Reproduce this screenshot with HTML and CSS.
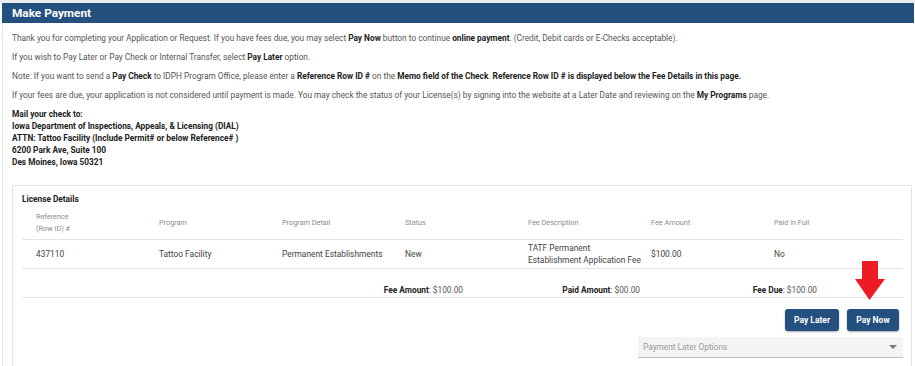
FILE: index.html
```html
<!DOCTYPE html>
<html lang="en">
<head>
<meta charset="utf-8">
<title>Make Payment</title>
<link rel="stylesheet" href="styles.css">
</head>
<body>
<section class="panel">
  <h1 class="panel-title">Make Payment</h1>
  <div class="panel-body">
    <p>Thank you for completing your Application or Request. If you have fees due, you may select <b>Pay Now</b> button to continue <b>online payment</b>. (Credit, Debit cards or E-Checks acceptable).</p>
    <p>If you wish to Pay Later or Pay Check or Internal Transfer, select <b>Pay Later</b> option.</p>
    <p>Note: If you want to send a <b>Pay Check</b> to IDPH Program Office, please enter a <b>Reference Row ID #</b> on the <b>Memo field of the Check</b>. <b>Reference Row ID # is displayed below the Fee Details in this page.</b></p>
    <p>If your fees are due, your application is not considered until payment is made. You may check the status of your License(s) by signing into the website at a Later Date and reviewing on the <b>My Programs</b> page.</p>
    <p class="mail">Mail your check to:<br>Iowa Department of Inspections, Appeals, &amp; Licensing (DIAL)<br>ATTN: Tattoo Facility (Include Permit# or below Reference# )<br>6200 Park Ave, Suite 100<br>Des Moines, Iowa 50321</p>

    <div class="card">
      <h2 class="card-title">License Details</h2>
      <div class="grid head">
        <div class="cell">Reference<br>(Row ID) #</div>
        <div class="cell">Program</div>
        <div class="cell">Program Detail</div>
        <div class="cell">Status</div>
        <div class="cell">Fee Description</div>
        <div class="cell">Fee Amount</div>
        <div class="cell">Paid in Full</div>
      </div>
      <div class="grid row">
        <div class="cell">437110</div>
        <div class="cell">Tattoo Facility</div>
        <div class="cell">Permanent Establishments</div>
        <div class="cell">New</div>
        <div class="cell">TATF Permanent<br>Establishment Application Fee</div>
        <div class="cell">$100.00</div>
        <div class="cell">No</div>
      </div>
      <div class="totals">
        <span></span>
        <span class="total"><b>Fee Amount</b>: $100.00</span>
        <span class="total"><b>Paid Amount</b>: $00.00</span>
        <span class="total"><b>Fee Due</b>: $100.00</span>
        <span></span>
      </div>
      <div class="actions">
        <button class="btn" type="button">Pay Later</button>
        <button class="btn" type="button">Pay Now</button>
        <svg class="arrow" width="30" height="40" viewBox="0 0 30 40"><polygon points="7,0 23,0 23,18 30,18 14.5,39 0,18 7,18" fill="#ed1c24"/></svg>
      </div>
      <div class="select-row">
        <div class="select">
          <span>Payment Later Options</span>
          <svg width="8" height="5" viewBox="0 0 8 5"><polygon points="0,0 8,0 4,4" fill="#777"/></svg>
        </div>
      </div>
    </div>
  </div>
</section>
</body>
</html>
```
FILE: styles.css
```css
* { box-sizing: border-box; }
html, body { margin: 0; padding: 0; }
body {
  background: #fff;
  border-top: 3px solid #ececec;
  font-family: Roboto, "Liberation Sans", Arial, sans-serif;
  color: #555;
  font-size: 8.3px;
}
.panel { margin: 0 1px 0 2px; }
.panel-title {
  margin: 0;
  height: 20px;
  line-height: 20px;
  padding-left: 10px;
  background: #23507f;
  color: #fff;
  font-size: 11.8px;
  font-weight: 700;
}
.panel-body {
  border-left: 1px solid #e6e6e6;
  padding: 9px 2px 0 9px;
}
.panel-body p {
  margin: 0 0 7px;
  line-height: 12px;
}
.panel-body b { color: #222; font-weight: 700; }
.panel-body p.mail { color: #222; font-weight: 700; margin-bottom: 0; }
.card {
  margin-top: 17px;
  border: 1px solid #e6e6e6;
  padding: 7px 8px 20px 9px;
  position: relative;
}
.card-title {
  margin: 0;
  font-size: 8.3px;
  line-height: 12px;
  font-weight: 700;
  color: #222;
}
.grid {
  display: grid;
  grid-template-columns: repeat(6, 123px) 1fr;
  align-items: center;
}
.cell { padding-left: 14px; line-height: 12px; white-space: nowrap; }
.head {
  padding: 6px 0 4px;
  border-bottom: 1px solid #e4e4e4;
  font-size: 7.3px;
  color: #8c8c8c;
}
.row {
  padding: 2px 0;
  border-bottom: 1px solid #e4e4e4;
  color: #444;
  font-size: 8.4px;
}
.totals {
  display: grid;
  grid-template-columns: 1fr 177px 177px 177px 86px;
  padding: 15px 0 1px;
  line-height: 12px;
  border-bottom: 1px solid #e4e4e4;
  color: #555;
}
.total { text-align: right; }
.total b { color: #222; }
.actions {
  display: flex;
  justify-content: flex-end;
  gap: 8px;
  padding: 11px 4px 0 0;
  position: relative;
}
.btn {
  height: 22px;
  padding: 0;
  border: none;
  border-radius: 3px;
  background: #23507f;
  color: #fff;
  font-family: inherit;
  font-size: 8.5px;
  font-weight: 700;
  box-shadow: 0 1px 2px rgba(0,0,0,.35);
  width: 54px;
}
.btn + .btn { width: 52px; }
.arrow {
  position: absolute;
  left: 833px;
  top: -37px;
}
.select-row {
  display: flex;
  justify-content: flex-end;
  padding-top: 6px;
}
.select {
  width: 265px;
  height: 21px;
  background: #f4f4f4;
  border-bottom: 1px solid #bdbdbd;
  display: flex;
  align-items: center;
  justify-content: space-between;
  padding: 0 6px 0 5px;
  color: #9a9a9a;
  font-size: 8.3px;
}
```
